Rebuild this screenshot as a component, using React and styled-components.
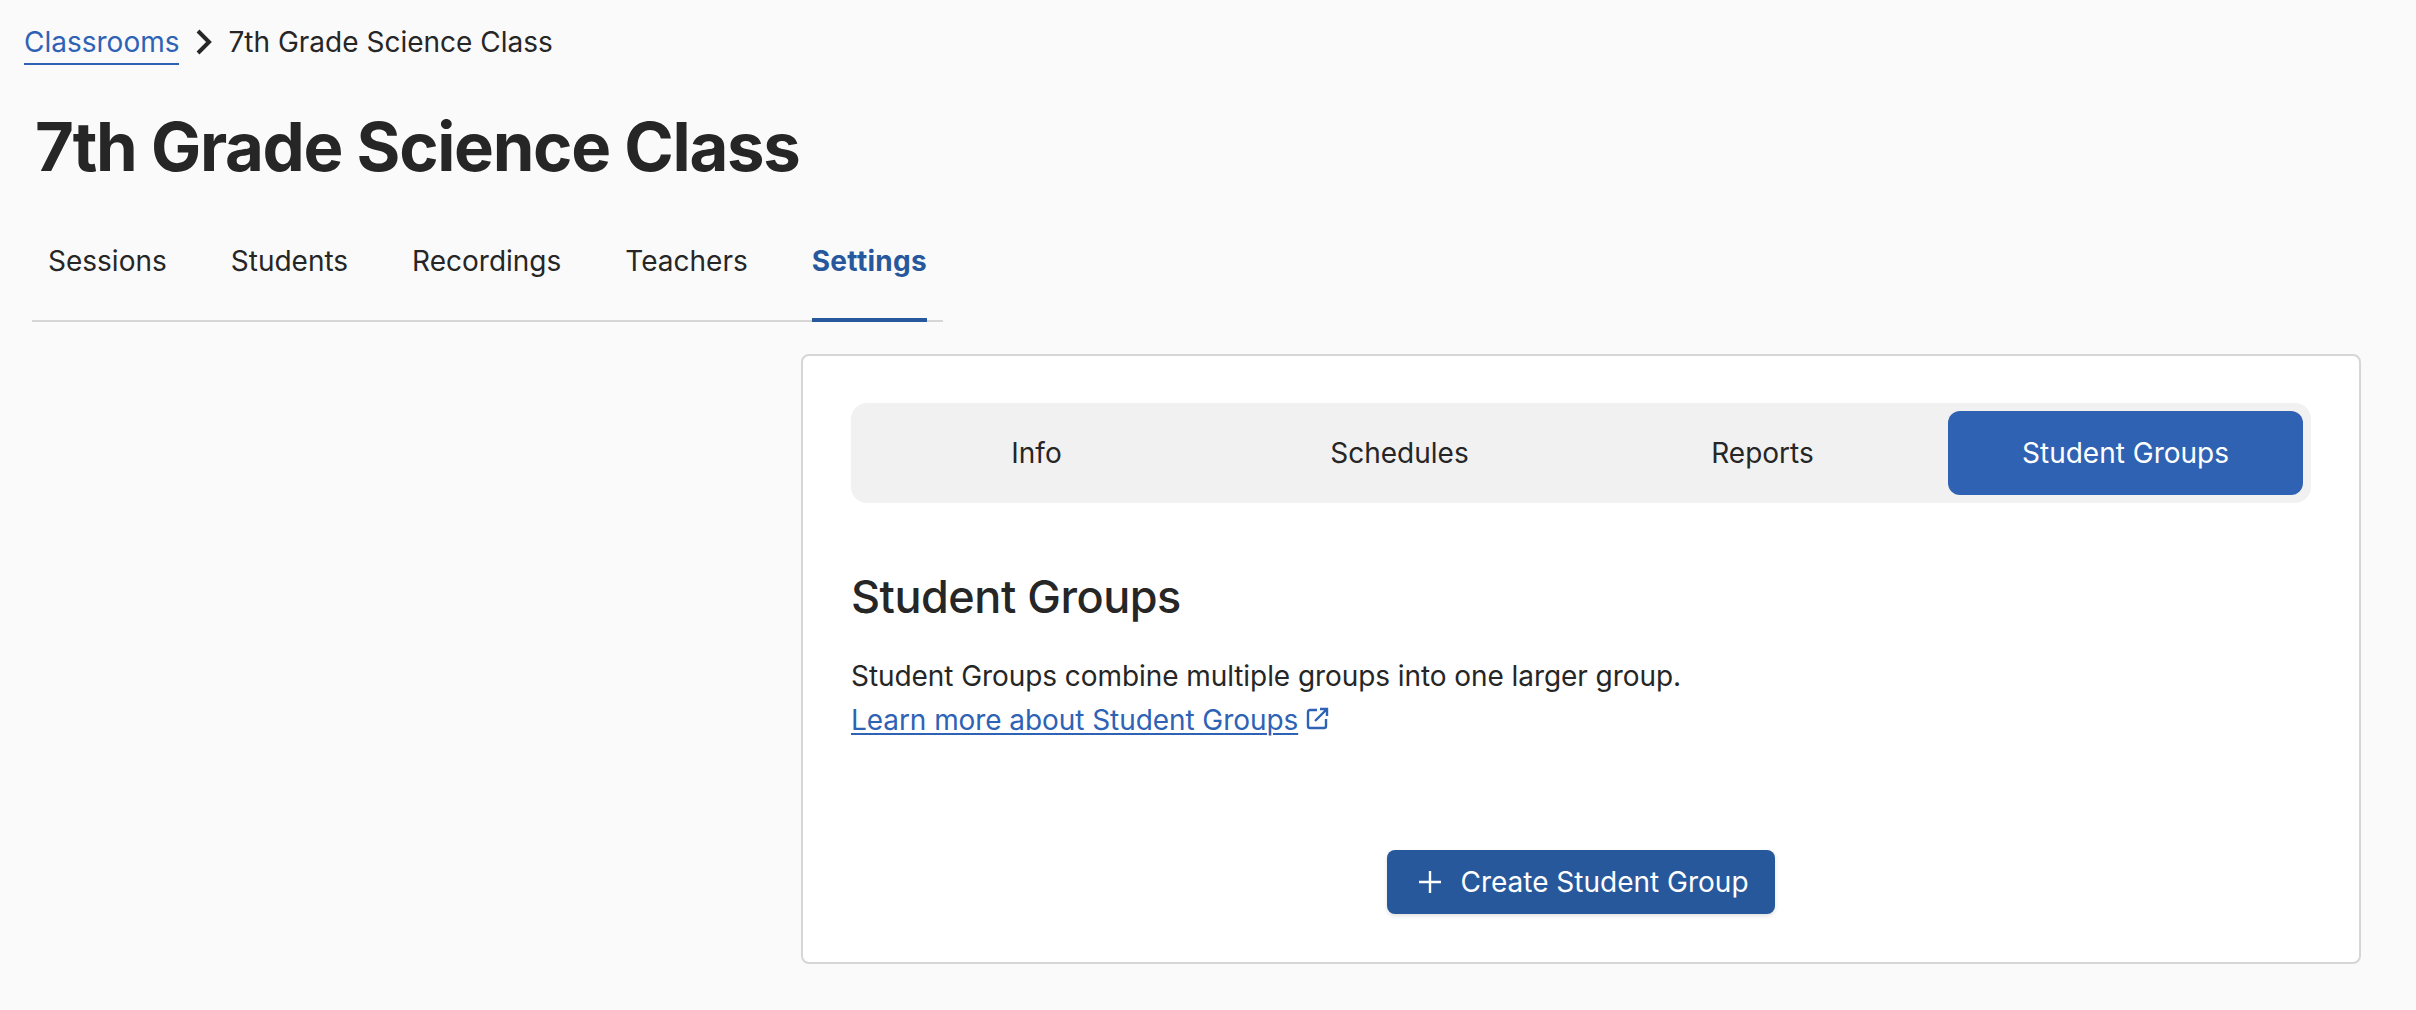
import React from "react";
import styled, { createGlobalStyle } from "styled-components";

const GlobalStyle = createGlobalStyle`
  html, body {
    margin: 0;
    padding: 0;
    background-color: #fafafa;
    font-family: "Inter", "Liberation Sans", sans-serif;
    color: #262626;
  }
`;

const Page = styled.div`
  box-sizing: border-box;
  height: 1010px;
  padding: 20px 55px 0 24px;
  overflow: hidden;
`;

const Breadcrumb = styled.nav`
  display: flex;
  align-items: center;
  height: 44px;
  font-size: 28px;
`;

const CrumbLink = styled.a`
  color: #2e62b5;
  text-decoration: none;
  line-height: 42px;
  border-bottom: 2px solid #2e62b5;
  margin-top: 2px;
`;

const CrumbIcon = styled.svg`
  width: 20px;
  height: 26px;
  margin: 0 14px 0 15px;
`;

const Title = styled.h1`
  margin: 43px 0 0 11px;
  font-size: 67px;
  line-height: 80px;
  font-weight: 700;
  letter-spacing: -1.32px;
`;

const TabBar = styled.div`
  display: inline-flex;
  gap: 64px;
  margin: 42px 0 0 8px;
  padding: 0 16px;
  border-bottom: 2px solid #d6d6d6;
`;

const Tab = styled.a`
  display: block;
  height: 89px;
  line-height: 65px;
  font-size: 28px;
  font-weight: ${(p) => (p.$active ? 700 : 400)};
  letter-spacing: ${(p) => (p.$active ? "0.3px" : "0")};
  color: ${(p) => (p.$active ? "#28589c" : "#262626")};
  border-bottom: 4px solid ${(p) => (p.$active ? "#28589c" : "transparent")};
  margin-bottom: -2px;
`;

const Content = styled.div`
  display: flex;
  justify-content: flex-end;
  margin-top: 32px;
`;

const Card = styled.section`
  box-sizing: border-box;
  width: 1560px;
  height: 610px;
  padding: 47px 48px;
  background-color: #ffffff;
  border: 2px solid #d6d6d6;
  border-radius: 8px;
`;

const Segments = styled.div`
  display: grid;
  grid-template-columns: repeat(4, 1fr);
  gap: 8px;
  padding: 8px;
  background-color: #f1f1f1;
  border-radius: 16px;
`;

const Segment = styled.button`
  height: 84px;
  border: none;
  border-radius: 12px;
  font-family: inherit;
  font-size: 28px;
  background-color: ${(p) => (p.$active ? "#2f62b3" : "transparent")};
  color: ${(p) => (p.$active ? "#ffffff" : "#262626")};
`;

const Heading = styled.h2`
  margin: 64px 0 0;
  font-size: 45px;
  line-height: 60px;
  font-weight: 500;
  letter-spacing: -0.48px;
`;

const Description = styled.p`
  margin: 27px 0 0;
  font-size: 28px;
  line-height: 44px;
  letter-spacing: -0.07px;
`;

const LearnLink = styled.a`
  color: #2e62b5;
  text-decoration: underline;
  text-decoration-thickness: 2px;
  text-underline-offset: 3px;
`;

const ExternalIcon = styled.svg`
  width: 24px;
  height: 24px;
  margin-left: 7px;
  vertical-align: -1px;
`;

const Actions = styled.div`
  display: flex;
  justify-content: center;
  margin-top: 108px;
`;

const CreateButton = styled.button`
  display: flex;
  align-items: center;
  gap: 18px;
  height: 64px;
  padding: 0 26px 0 31px;
  border: none;
  border-radius: 8px;
  background-color: #28589c;
  color: #ffffff;
  font-family: inherit;
  font-size: 28px;
  box-shadow: 0 2px 4px rgba(0, 0, 0, 0.12);
`;

const PlusIcon = styled.svg`
  width: 24px;
  height: 24px;
`;

export default function App() {
  return (
    <Page>
      <GlobalStyle />
      <Breadcrumb>
        <CrumbLink href="#">Classrooms</CrumbLink>
        <CrumbIcon viewBox="0 0 20 26" fill="none" stroke="#262626" strokeWidth="4">
          <path d="M4 2l11 11L4 24" />
        </CrumbIcon>
        <span>7th Grade Science Class</span>
      </Breadcrumb>
      <Title>7th Grade Science Class</Title>
      <TabBar>
        <Tab>Sessions</Tab>
        <Tab>Students</Tab>
        <Tab>Recordings</Tab>
        <Tab>Teachers</Tab>
        <Tab $active>Settings</Tab>
      </TabBar>
      <Content>
        <Card>
          <Segments>
            <Segment>Info</Segment>
            <Segment>Schedules</Segment>
            <Segment>Reports</Segment>
            <Segment $active>Student Groups</Segment>
          </Segments>
          <Heading>Student Groups</Heading>
          <Description>
            Student Groups combine multiple groups into one larger group.
            <br />
            <LearnLink href="#">Learn more about Student Groups</LearnLink>
            <ExternalIcon viewBox="0 0 24 24" fill="none" stroke="#2e62b5" strokeWidth="2.4">
              <path d="M12 3H5a2 2 0 0 0-2 2v14a2 2 0 0 0 2 2h14a2 2 0 0 0 2-2v-7" />
              <path d="M15 2h7v7M22 2L10 14" />
            </ExternalIcon>
          </Description>
          <Actions>
            <CreateButton>
              <PlusIcon viewBox="0 0 24 24" fill="none" stroke="#ffffff" strokeWidth="2.4">
                <path d="M12 1v22M1 12h22" />
              </PlusIcon>
              Create Student Group
            </CreateButton>
          </Actions>
        </Card>
      </Content>
    </Page>
  );
}
